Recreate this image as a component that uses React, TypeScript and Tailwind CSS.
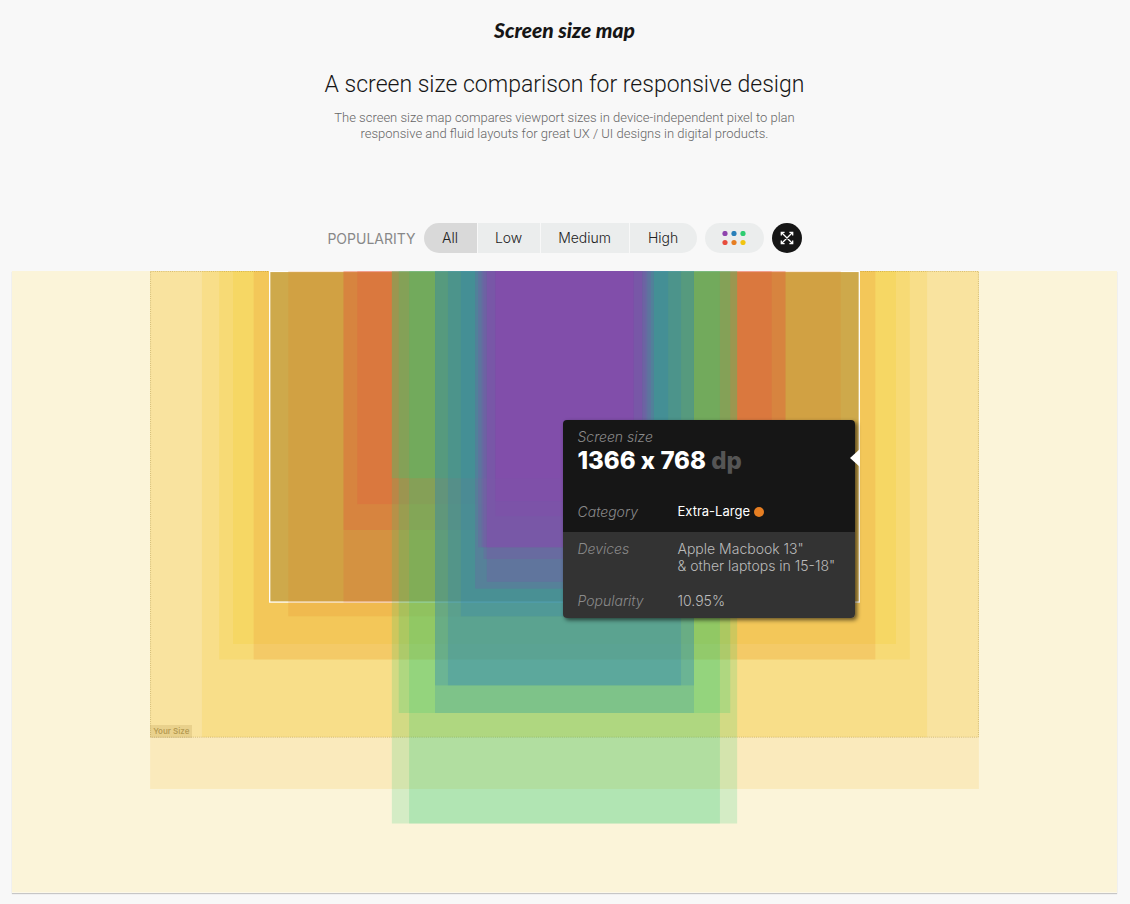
import { useState } from "react";

const MAP_WIDTH = 2560;
const MAP_HEIGHT = 1440;

type Screen = { w: number; h: number; fill: string; alpha: number };

const YELLOW = "#f1c40f";
const ORANGE = "#e67e22";
const RED = "#e74c3c";
const GREEN = "#2ecc71";
const BLUE = "#2980b9";
const PURPLE = "#8e44ad";

const largeScreens: Screen[] = [
  { w: 2560, h: 1440, fill: YELLOW, alpha: 0.15 },
  { w: 1920, h: 1200, fill: "#f7b81d", alpha: 0.15 },
  { w: 1920, h: 1080, fill: YELLOW, alpha: 0.17 },
  { w: 1680, h: 1080, fill: YELLOW, alpha: 0.15 },
  { w: 1600, h: 900, fill: YELLOW, alpha: 0.16 },
  { w: 1536, h: 864, fill: YELLOW, alpha: 0.16 },
  { w: 1440, h: 900, fill: ORANGE, alpha: 0.17 },
];

const smallScreens: Screen[] = [
  { w: 1280, h: 800, fill: ORANGE, alpha: 0.18 },
  { w: 1024, h: 768, fill: RED, alpha: 0.17 },
  { w: 1024, h: 600, fill: RED, alpha: 0.19 },
  { w: 960, h: 540, fill: RED, alpha: 0.2 },
  { w: 800, h: 1280, fill: GREEN, alpha: 0.19 },
  { w: 800, h: 480, fill: GREEN, alpha: 0.22 },
  { w: 768, h: 1024, fill: GREEN, alpha: 0.21 },
  { w: 720, h: 1280, fill: GREEN, alpha: 0.21 },
  { w: 600, h: 1024, fill: BLUE, alpha: 0.2 },
  { w: 600, h: 960, fill: BLUE, alpha: 0.22 },
  { w: 540, h: 960, fill: BLUE, alpha: 0.22 },
  { w: 480, h: 800, fill: BLUE, alpha: 0.22 },
  { w: 414, h: 736, fill: PURPLE, alpha: 0.2 },
  { w: 400, h: 640, fill: PURPLE, alpha: 0.2 },
  { w: 384, h: 640, fill: PURPLE, alpha: 0.2 },
  { w: 375, h: 667, fill: PURPLE, alpha: 0.2 },
  { w: 360, h: 720, fill: PURPLE, alpha: 0.2 },
  { w: 360, h: 640, fill: PURPLE, alpha: 0.2 },
  { w: 320, h: 568, fill: PURPLE, alpha: 0.2 },
  { w: 320, h: 533, fill: PURPLE, alpha: 0.2 },
  { w: 320, h: 480, fill: PURPLE, alpha: 0.2 },
];

function ScreenRect({ w, h, fill, alpha }: Screen) {
  return <rect x={(MAP_WIDTH - w) / 2} y={0} width={w} height={h} fill={fill} fillOpacity={alpha} />;
}

function ScreenMap() {
  return (
    <svg
      viewBox={`0 0 ${MAP_WIDTH} ${MAP_HEIGHT}`}
      className="block w-full bg-[#fdfdfd] shadow-[0_1px_1px_#00000033]"
      role="img"
      aria-label="Map of screen sizes"
    >
      {largeScreens.map((s) => (
        <ScreenRect key={`${s.w}x${s.h}`} {...s} />
      ))}
      <rect
        x={321}
        y={1}
        width={1918}
        height={1079}
        fill="none"
        stroke="#8a6d1f"
        strokeOpacity={0.45}
        strokeWidth={2}
        strokeDasharray="2 3"
      />
      <rect x={597} y={1} width={1366} height={766} fill="#000" fillOpacity={0.15} stroke="#fff" strokeWidth={3} />
      {smallScreens.map((s) => (
        <ScreenRect key={`${s.w}x${s.h}`} {...s} />
      ))}
    </svg>
  );
}

function Tooltip() {
  return (
    <div
      role="tooltip"
      className="absolute top-[149px] left-[calc(50%-2px)] w-[292px] rounded-sm text-sm leading-[17px] font-light shadow-[2px_2px_4px_#00000099]"
    >
      <div className="rounded-t-sm bg-[#161616] px-[15px] pt-2 pb-3">
        <p className="text-[#8a8a8a] italic">Screen size</p>
        <p className="pt-0.5 text-2xl leading-7 font-extrabold text-white [font-feature-settings:'calt'_0]">
          1366 x 768 <span className="text-[#555]">dp</span>
        </p>
        <dl className="grid grid-cols-[100px_1fr] pt-7">
          <dt className="text-[#8a8a8a] italic">Category</dt>
          <dd className="flex items-center gap-1 text-[13px] font-normal text-white">
            Extra-Large <span className="mt-px size-2.5 rounded-full bg-[#e67e22]" />
          </dd>
        </dl>
      </div>
      <dl className="grid grid-cols-[100px_1fr] gap-y-[18px] rounded-b-sm bg-[#333] px-[15px] pt-2 pb-[9px]">
        <dt className="text-[#8a8a8a] italic">Devices</dt>
        <dd className="whitespace-nowrap text-[#bbb]">
          Apple Macbook 13"
          <br />& other laptops in 15-18"
        </dd>
        <dt className="text-[#8a8a8a] italic">Popularity</dt>
        <dd className="text-[#bbb]">10.95%</dd>
      </dl>
      <svg viewBox="0 0 10 18" className="absolute top-[29px] -right-[5px] h-[18px] w-[10px]" aria-hidden="true">
        <path d="M10 0 0 9l10 9z" fill="#fff" />
      </svg>
    </div>
  );
}

const levels = ["All", "Low", "Medium", "High"];
const dots = [PURPLE, BLUE, GREEN, RED, ORANGE, YELLOW];

function Controls() {
  const [level, setLevel] = useState("All");
  return (
    <div className="flex items-center justify-center gap-2">
      <span id="popularity" className="pt-0.5 text-sm text-[#888]">
        POPULARITY
      </span>
      <div
        role="group"
        aria-labelledby="popularity"
        className="grid h-[30px] grid-cols-[53px_62px_88px_67px] gap-px overflow-hidden rounded-full"
      >
        {levels.map((name) => (
          <button
            key={name}
            type="button"
            aria-pressed={name === level}
            onClick={() => setLevel(name)}
            className={`pb-px text-sm font-light text-[#222] ${name === level ? "bg-[#d9d9d9]" : "bg-[#ebeded]"}`}
          >
            {name}
          </button>
        ))}
      </div>
      <button
        type="button"
        aria-label="Categories"
        className="flex h-[30px] w-[59px] items-center justify-center rounded-full bg-[#ebeded]"
      >
        <svg viewBox="0 0 24 14" className="h-3.5 w-6">
          {dots.map((fill, i) => (
            <circle key={fill} cx={3 + (i % 3) * 9} cy={i < 3 ? 2.5 : 11.5} r={2.6} fill={fill} />
          ))}
        </svg>
      </button>
      <button
        type="button"
        aria-label="Full screen"
        className="flex size-[30px] items-center justify-center rounded-full bg-[#161616]"
      >
        <svg viewBox="0 0 14 14" className="size-3.5" fill="none" stroke="#fff" strokeWidth="1.3">
          <path d="M1.5 1.5l11 11M12.5 1.5l-11 11M4.6 1.3H1.3v3.3M9.4 1.3h3.3v3.3M4.6 12.7H1.3V9.4M9.4 12.7h3.3V9.4" />
        </svg>
      </button>
    </div>
  );
}

export default function App() {
  return (
    <div className="min-h-screen bg-[#f8f8f8] pr-[13px] pb-2.5 pl-3 font-['Inter','Liberation_Sans',sans-serif]">
      <header className="pt-4 text-center text-[#161616]">
        <a href="#top" className="block font-['Lato',sans-serif] text-[21px] leading-7 font-black italic">
          Screen size map
        </a>
        <h1 className="pt-[25px] font-['Roboto',sans-serif] text-[23px] leading-8 font-light">
          A screen size comparison for responsive design
        </h1>
        <p className="mx-auto max-w-[480px] pt-[9px] font-['Roboto',sans-serif] text-[13px] leading-4 font-light text-[#666]">
          The screen size map compares viewport sizes in device-independent pixel to plan responsive and fluid layouts
          for great UX / UI designs in digital products.
        </p>
      </header>
      <main className="pt-[81px]">
        <Controls />
        <section className="relative mt-[18px]">
          <ScreenMap />
          <div className="absolute top-[73%] left-[12.5%] bg-[#8a6d1f]/15 px-[3px] text-[8px] leading-[13px] font-semibold text-[#8a6d1f]/55">
            Your Size
          </div>
          <Tooltip />
        </section>
      </main>
    </div>
  );
}
